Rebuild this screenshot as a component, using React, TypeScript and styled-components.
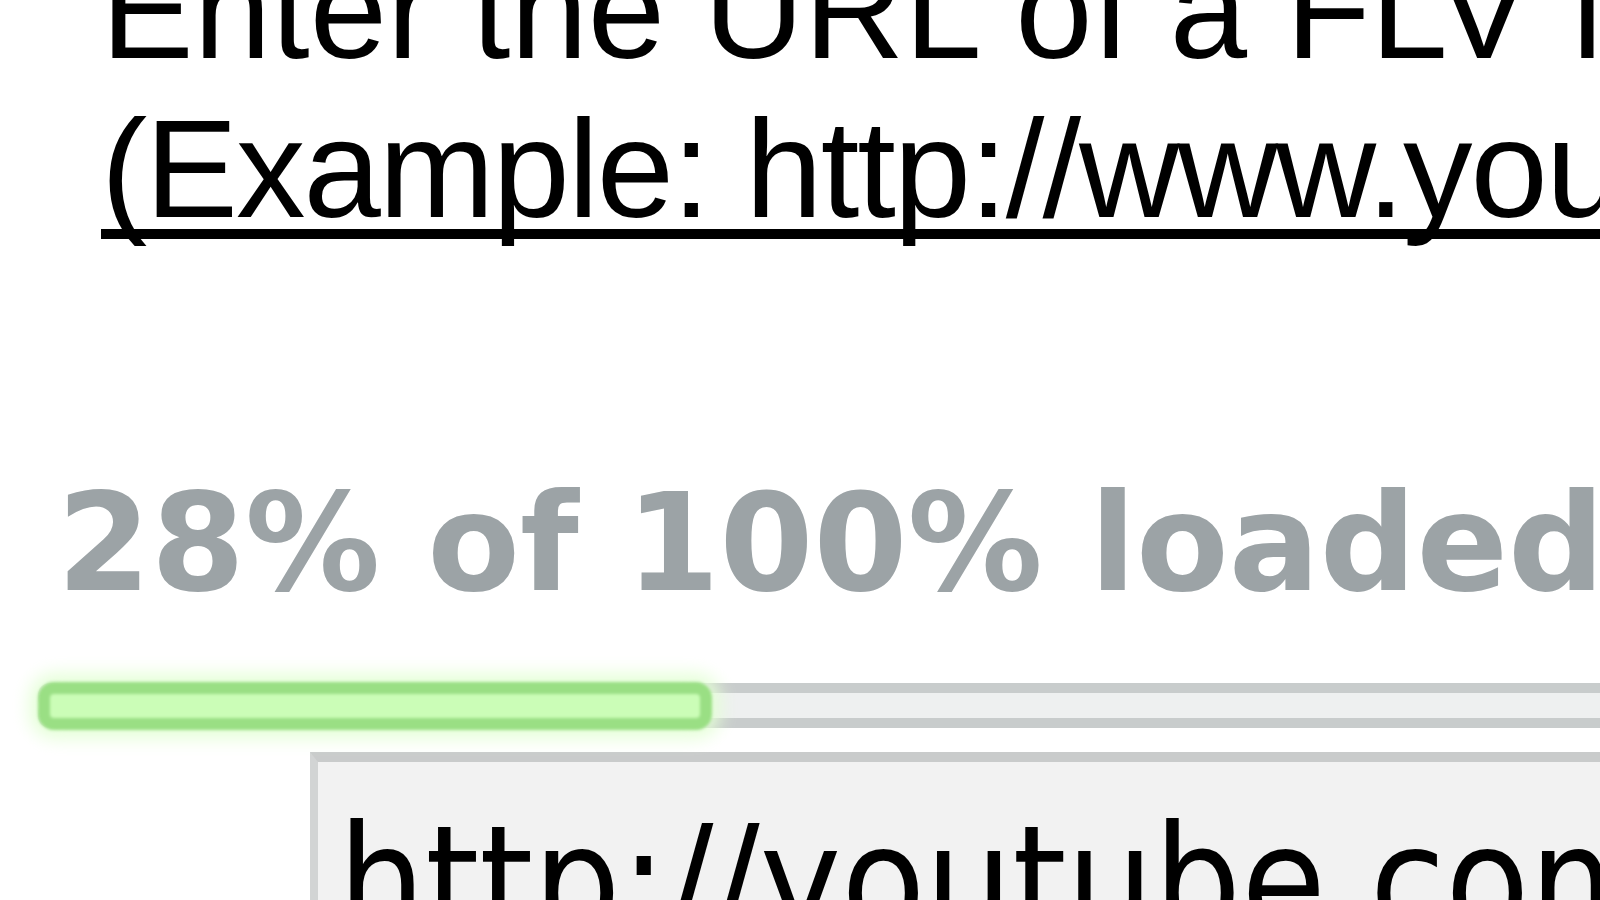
import React from "react";
import styled, { createGlobalStyle } from "styled-components";

const GlobalStyle = createGlobalStyle`
  html, body {
    margin: 0;
    padding: 0;
    background: #ffffff;
    overflow: hidden;
  }
`;

const Viewport = styled.div`
  width: 1600px;
  height: 900px;
  overflow: hidden;
  background: #ffffff;
  display: flex;
  flex-direction: column;
`;

const Intro = styled.p`
  margin: -70px 0 0 101px;
  font-family: "Liberation Sans", Arial, sans-serif;
  font-size: 139px;
  line-height: 159px;
  color: #000000;
  white-space: nowrap;
`;

const ExampleLink = styled.a`
  color: #000000;
  letter-spacing: -2px;
  text-decoration: underline;
  text-decoration-skip-ink: none;
  text-decoration-thickness: 10px;
  text-underline-offset: 12px;
`;

const Status = styled.div`
  margin: 221px 0 0 57px;
  font-family: "DejaVu Sans", Verdana, sans-serif;
  font-weight: bold;
  font-size: 135px;
  line-height: 150px;
  color: #9ca3a6;
  white-space: nowrap;
`;

const Track = styled.div<{ $width: number }>`
  margin: 64px 0 0 38px;
  width: ${(p) => p.$width}px;
  flex: none;
  height: 45px;
  display: flex;
  align-items: center;
  background: #eef0f0;
  border-radius: 12px;
  box-shadow: inset 0 10px 0 #c8cccc, inset 0 -10px 0 #c8cccc;
`;

const Fill = styled.div`
  box-sizing: border-box;
  height: 48px;
  flex: none;
  background: #cbfdb7;
  border: 12px solid #9adf84;
  border-radius: 16px;
  box-shadow: 0 0 18px 8px #e4ffd6;
  filter: blur(1.5px);
`;

const UrlInput = styled.input`
  margin: 24px 0 0 310px;
  flex: none;
  width: 2400px;
  height: 180px;
  padding: 30px 20px 0;
  border: 10px solid #c9cbcb;
  border-left-width: 8px;
  border-left-color: #d2d4d4;
  background: #f2f2f2;
  font-family: "DejaVu Sans Condensed", "DejaVu Sans", Verdana, sans-serif;
  font-stretch: semi-condensed;
  font-size: 153px;
  line-height: 180px;
  color: #000000;
  outline: none;
`;

const progress = { loaded: 28, total: 100 };
const trackWidth = 2407;

export default function App() {
  return (
    <>
      <GlobalStyle />
      <Viewport>
        <Intro>
          Enter the URL of a FLV file to download it.
          <br />
          <ExampleLink href="#">
            (Example: http://www.youtube.com/watch?v=oHg5SJYRHA0)
          </ExampleLink>
        </Intro>
        <Status>
          {progress.loaded}% of {progress.total}% loaded
        </Status>
        <Track $width={trackWidth}>
          <Fill style={{ width: (trackWidth * progress.loaded) / progress.total }} />
        </Track>
        <UrlInput readOnly value="http://youtube.com/watch?v=oHg5SJYRHA0" />
      </Viewport>
    </>
  );
}
